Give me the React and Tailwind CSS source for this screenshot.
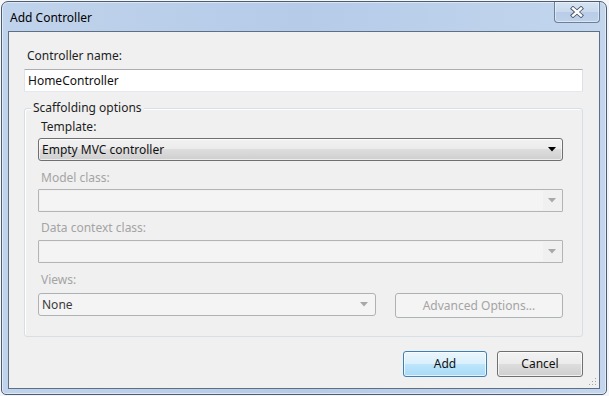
import React from "react";

const font = { fontFamily: '"Noto Sans", "Segoe UI", sans-serif' };

function Arrow({ color }) {
  return (
    <svg width="8" height="5" viewBox="0 0 8 5">
      <path d="M0 0 L8 0 L4 4.5 Z" fill={color} />
    </svg>
  );
}

export default function App() {
  return (
    <div className="w-[609px] h-[396px] bg-[#f4f6f9] pt-[1px] pl-[1px]" style={font}>
      <div className="relative w-[606px] h-[394px] rounded-t-[7px] rounded-b-[5px] border border-[#4d5c6f] bg-gradient-to-r from-[#c0d3ec] via-[#b5cbe8] to-[#c3d6ee] flex flex-col shadow-[inset_0_0_0_1px_rgba(255,255,255,0.5)]">
        {/* title bar */}
        <div className="h-[29px] flex items-center pl-[8px] pt-[3px]">
          <span className="text-[12px] leading-[16px] text-black">Add Controller</span>
        </div>
        {/* close button */}
        <div className="absolute top-0 right-[6px] w-[46px] h-[21px] rounded-b-[4px] border border-t-0 border-[#6d7f98] bg-[linear-gradient(#d6e3f2,#c9daee_50%,#b8cce8_50%,#bed1ea)] shadow-[inset_0_0_0_1px_rgba(255,255,255,0.45)] flex items-center justify-center">
          <svg width="14" height="12" viewBox="0 0 14 12">
            <path d="M3 2.5 L11 9.5 M11 2.5 L3 9.5" stroke="#4a5668" strokeWidth="4.2" strokeLinecap="square" />
            <path d="M3 2.5 L11 9.5 M11 2.5 L3 9.5" stroke="#ffffff" strokeWidth="2.4" strokeLinecap="square" />
          </svg>
        </div>
        {/* client */}
        <div className="relative mx-[6px] mb-[5px] flex-1 border border-[#5f6f83] bg-[#f0f0f0] flex flex-col pl-[15px] pr-[16px] pt-[16px] text-[12px] leading-[16px] text-[#1e1e1e]">
          <div className="pl-[3px] h-[16px]">Controller name:</div>
          <div className="mt-[5px] h-[23px] border border-[#abadb3] border-l-[#e2e3ea] border-r-[#dbdfe6] border-b-[#e3e9ef] bg-white rounded-[1px] flex items-center pl-[3px] text-[#111]">
            HomeController
          </div>
          {/* group box */}
          <div className="relative mt-[16px] h-[229px] border border-[#d5dfe5] rounded-[3px] shadow-[inset_1px_1px_0_#ffffff] pt-[10px] pl-[13px] pr-[19px] flex flex-col">
            <div className="absolute top-[-9px] left-[6px] bg-[#f0f0f0] px-[2px] leading-[16px]">Scaffolding options</div>
            <div className="pl-[3px] h-[16px]">Template:</div>
            <div className="mt-[3px] h-[23px] rounded-[3px] border border-[#707070] bg-[linear-gradient(#f2f2f2,#ebebeb_50%,#dddddd_50%,#cfcfcf)] flex items-center justify-between pl-[3px] pr-[6px] shadow-[inset_0_0_0_1px_rgba(255,255,255,0.6)]">
              <span className="text-[#111]">Empty MVC controller</span>
              <Arrow color="#000" />
            </div>
            <div className="mt-[9px] pl-[3px] h-[16px] text-[#a4a4a4]">Model class:</div>
            <div className="mt-[3px] h-[23px] border border-[#b4b4b4] rounded-[1px] bg-[#f0f0f0] flex items-stretch p-[1px]">
              <div className="flex-1 bg-[#f4f4f4]" />
              <div className="w-[18px] flex items-center justify-center"><Arrow color="#a8a8a8" /></div>
            </div>
            <div className="mt-[8px] pl-[3px] h-[16px] text-[#a4a4a4]">Data context class:</div>
            <div className="mt-[4px] h-[23px] border border-[#b4b4b4] rounded-[1px] bg-[#f0f0f0] flex items-stretch p-[1px]">
              <div className="flex-1 bg-[#f4f4f4]" />
              <div className="w-[18px] flex items-center justify-center"><Arrow color="#a8a8a8" /></div>
            </div>
            <div className="mt-[9px] pl-[3px] h-[16px] text-[#a4a4a4]">Views:</div>
            <div className="mt-[5px] flex items-start gap-[19px]">
              <div className="w-[338px] h-[23px] rounded-[3px] border border-[#adb2b5] bg-[#f4f4f4] flex items-center justify-between pl-[3px] pr-[7px]">
                <span className="text-[#3b3b3b]">None</span>
                <Arrow color="#a8a8a8" />
              </div>
              <div className="flex-1 h-[25px] rounded-[3px] border border-[#adb2b5] bg-[#f4f4f4] flex items-center justify-center text-[#a4a4a4]">
                Advanced Options...
              </div>
            </div>
          </div>
          {/* buttons */}
          <div className="mt-[14px] flex justify-end gap-[10px]">
            <div className="w-[84px] h-[26px] rounded-[3px] border border-[#3c7fb1] bg-[linear-gradient(#eaf6fd,#d9f0fc_50%,#bee6fd_50%,#a7d9f5)] shadow-[inset_0_0_0_1px_rgba(255,255,255,0.7)] flex items-center justify-center text-[#111]">
              Add
            </div>
            <div className="w-[86px] h-[26px] rounded-[3px] border border-[#707070] bg-[linear-gradient(#f2f2f2,#ebebeb_50%,#dddddd_50%,#cfcfcf)] shadow-[inset_0_0_0_1px_rgba(255,255,255,0.7)] flex items-center justify-center text-[#111]">
              Cancel
            </div>
          </div>
          {/* resize grip */}
          <div className="absolute right-[2px] bottom-[2px]">
            <svg width="10" height="10" viewBox="0 0 10 10">
              {[[8, 2], [8, 5], [5, 5], [8, 8], [5, 8], [2, 8]].map(([x, y], i) => (
                <rect key={i} x={x} y={y} width="1" height="1" fill="#a6a6a6" />
              ))}
            </svg>
          </div>
        </div>
      </div>
    </div>
  );
}
